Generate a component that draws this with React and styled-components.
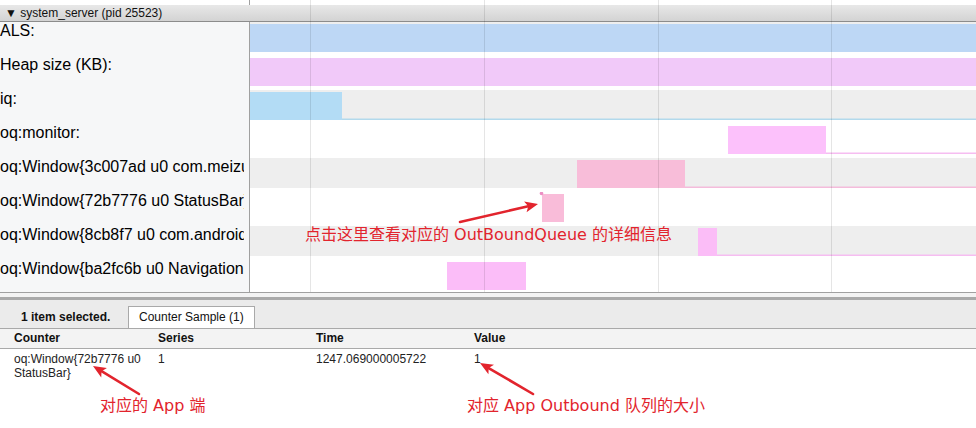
import React from 'react';
import styled, { createGlobalStyle } from 'styled-components';

const GlobalStyle = createGlobalStyle`
  html, body { margin: 0; padding: 0; background: #fff; }
  body { font-family: "Liberation Sans", Arial, sans-serif; }
  * { box-sizing: border-box; }
`;

const LABEL_W = 250;
const TRACK_W = 726;
const ROW_H = 34;
const RED = '#e2242d';

const Page = styled.div`
  position: relative;
  width: 976px;
  height: 428px;
  overflow: hidden;
  display: flex;
  flex-direction: column;
  background: #fff;
  color: #000;
`;

const Timeline = styled.section`
  position: relative;
  display: flex;
  flex-direction: column;
`;

const TopStrip = styled.div`
  display: grid;
  grid-template-columns: ${LABEL_W}px 1fr;
  height: 5px;
`;

const StripLabel = styled.div`
  border-right: 1px solid #a0a0a0;
`;

const ProcessHeader = styled.div`
  height: 17px;
  padding-left: 5px;
  display: flex;
  align-items: center;
  font-size: 12px;
  color: #111;
  background: linear-gradient(#e8e8e8, #d3d3d3);
  border-bottom: 1px solid #8c8c8c;
  white-space: nowrap;
`;

const TrackList = styled.div`
  height: 271px;
  overflow: hidden;
  border-bottom: 1px solid #a0a0a0;
`;

const TrackRow = styled.div`
  display: grid;
  grid-template-columns: ${LABEL_W}px 1fr;
  height: ${ROW_H}px;
`;

const TrackLabel = styled.div`
  background: #f6f7f8;
  border-right: 1px solid #a0a0a0;
  padding-right: 5px;
  font-size: 16px;
  line-height: 18px;
  color: #000;
`;

const LabelText = styled.div`
  overflow: hidden;
  white-space: nowrap;
`;

const TrackCanvas = styled.svg`
  display: block;
`;

const GridLayer = styled.svg`
  position: absolute;
  top: 0;
  left: ${LABEL_W}px;
  width: ${TRACK_W}px;
  height: 100%;
  pointer-events: none;
`;

const Splitter = styled.div`
  height: 7px;
  background: #f3f3f3;
  border-bottom: 3px solid #a9a9a9;
`;

const TabBar = styled.div`
  height: 29px;
  display: flex;
  align-items: flex-end;
  background: #ebebeb;
  border-bottom: 1px solid #a9a9a9;
  font-size: 12px;
`;

const SelectionLabel = styled.div`
  width: 128px;
  padding-left: 21px;
  height: 22px;
  line-height: 22px;
  font-weight: bold;
  color: #111;
`;

const Tab = styled.div`
  height: 22px;
  line-height: 21px;
  padding: 0 10px;
  background: #fff;
  border: 1px solid #a9a9a9;
  border-bottom: none;
  color: #111;
`;

const Columns = styled.div`
  display: grid;
  grid-template-columns: 158px 158px 158px 1fr;
  font-size: 12px;
`;

const TableHead = styled(Columns)`
  height: 20px;
  line-height: 19px;
  background: #f3f3f3;
  border-bottom: 1px solid #a9a9a9;
  font-weight: bold;
  color: #111;
`;

const TableRow = styled(Columns)`
  padding-top: 3px;
  line-height: 14px;
  color: #222;
`;

const Cell = styled.div`
  padding-left: ${(p) => (p.$first ? '14px' : '0')};
  padding-right: 6px;
`;

const AnnotationLayer = styled.svg`
  position: absolute;
  inset: 0;
  width: 976px;
  height: 428px;
  pointer-events: none;
`;

const Note = styled.div`
  position: absolute;
  left: ${(p) => p.$x}px;
  top: ${(p) => p.$y}px;
  font-family: "DejaVu Sans", "Noto Sans CJK SC", sans-serif;
  font-size: 16px;
  line-height: 20px;
  color: ${RED};
  white-space: nowrap;
  pointer-events: none;
`;

const tracks = [
  { label: 'ALS:', bars: [{ x: 0, w: TRACK_W, c: '#bdd7f5' }] },
  { label: 'Heap size (KB):', bars: [{ x: 0, w: TRACK_W, c: '#f1c9f9' }] },
  { label: 'iq:', bars: [{ x: 0, w: 92, c: '#b3dcf5' }], tail: { x: 92, c: '#b2d9ec' } },
  { label: 'oq:monitor:', bars: [{ x: 478, w: 98, c: '#fcc1fb' }], tail: { x: 576, c: '#f6bdf1' } },
  {
    label: 'oq:Window{3c007ad u0 com.meizu.flyme.launcher/com.meizu.flyme.launcher.Launcher}',
    bars: [{ x: 327, w: 108, c: '#f8bdd9' }],
    tail: { x: 435, c: '#f4bcdb' },
  },
  {
    label: 'oq:Window{72b7776 u0 StatusBar}',
    bars: [{ x: 292, w: 22, c: '#f9bcd9' }],
    marker: { x: 291.5, y: 1.5 },
  },
  {
    label: 'oq:Window{8cb8f7 u0 com.android.systemui/com.android.systemui.recents.RecentsActivity}',
    bars: [{ x: 448, w: 19, c: '#fbbdf7' }],
    tail: { x: 467, c: '#f6bdf1' },
  },
  { label: 'oq:Window{ba2fc6b u0 NavigationBar}', bars: [{ x: 197, w: 79, c: '#fbbdf8' }] },
];

const gridLines = [60, 234, 408, 581];

function CounterTrack({ track, index }) {
  return (
    <TrackCanvas width={TRACK_W} height={ROW_H} viewBox={`0 0 ${TRACK_W} ${ROW_H}`}>
      {index % 2 === 0 && <rect x="0" y="0" width={TRACK_W} height="30" fill="#eeeeee" />}
      {track.bars.map((b, i) => (
        <rect key={i} x={b.x} y="2" width={b.w} height="28" fill={b.c} />
      ))}
      {track.tail && (
        <rect x={track.tail.x} y="28.5" width={TRACK_W - track.tail.x} height="1.5" fill={track.tail.c} />
      )}
      {track.marker && <circle cx={track.marker.x} cy={track.marker.y} r="1.8" fill="#ec8fc4" />}
    </TrackCanvas>
  );
}

function Arrow({ from, to }) {
  const [x1, y1] = from;
  const [x2, y2] = to;
  const dx = x2 - x1;
  const dy = y2 - y1;
  const len = Math.hypot(dx, dy);
  const ux = dx / len;
  const uy = dy / len;
  const L = 13;
  const W = 5.5;
  const bx = x2 - ux * L;
  const by = y2 - uy * L;
  const nx = -uy;
  const ny = ux;
  const pts = `${x2},${y2} ${bx + nx * W},${by + ny * W} ${bx + ux * 3},${by + uy * 3} ${bx - nx * W},${by - ny * W}`;
  return (
    <g>
      <line x1={x1} y1={y1} x2={bx + ux * 3} y2={by + uy * 3} stroke={RED} strokeWidth="2.6" strokeLinecap="round" />
      <polygon points={pts} fill={RED} />
    </g>
  );
}

export default function App() {
  return (
    <>
      <GlobalStyle />
      <Page>
        <Timeline>
          <TopStrip>
            <StripLabel />
            <div />
          </TopStrip>
          <ProcessHeader>▼ system_server (pid 25523)</ProcessHeader>
          <TrackList>
            {tracks.map((t, i) => (
              <TrackRow key={i}>
                <TrackLabel>
                  <LabelText>{t.label}</LabelText>
                </TrackLabel>
                <CounterTrack track={t} index={i} />
              </TrackRow>
            ))}
          </TrackList>
          <GridLayer viewBox={`0 0 ${TRACK_W} 293`} preserveAspectRatio="none">
            {gridLines.map((x) => (
              <line key={x} x1={x + 0.5} y1="0" x2={x + 0.5} y2="292" stroke="rgba(0,0,0,0.1)" strokeWidth="1" />
            ))}
          </GridLayer>
        </Timeline>
        <Splitter />
        <TabBar>
          <SelectionLabel>1 item selected.</SelectionLabel>
          <Tab>Counter Sample (1)</Tab>
        </TabBar>
        <TableHead>
          <Cell $first>Counter</Cell>
          <Cell>Series</Cell>
          <Cell>Time</Cell>
          <Cell>Value</Cell>
        </TableHead>
        <TableRow>
          <Cell $first>oq:Window{'{'}72b7776 u0 StatusBar{'}'}</Cell>
          <Cell>1</Cell>
          <Cell>1247.069000005722</Cell>
          <Cell>1</Cell>
        </TableRow>
        <AnnotationLayer viewBox="0 0 976 428">
          <Arrow from={[460, 222]} to={[538, 204]} />
          <Arrow from={[139, 394]} to={[93, 366]} />
          <Arrow from={[533, 394]} to={[480, 363]} />
        </AnnotationLayer>
        <Note $x={305} $y={225}>点击这里查看对应的 OutBoundQueue 的详细信息</Note>
        <Note $x={100} $y={396}>对应的 App 端</Note>
        <Note $x={467} $y={396}>对应 App Outbound 队列的大小</Note>
      </Page>
    </>
  );
}
